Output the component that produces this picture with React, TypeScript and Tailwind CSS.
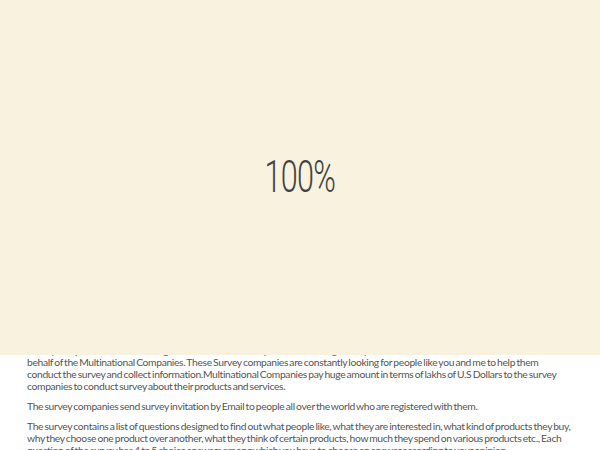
import React from 'react';

const App = () => {
  return (
    <div className="relative w-[600px] h-[450px] overflow-hidden bg-white">
      <div className="h-[344px]" />
      <div
        className="pl-[27px] pr-[25px] flex flex-col gap-2 text-[#555] text-[10.3px] leading-[12px] tracking-[-0.33px] [word-spacing:-1px]"
        style={{ fontFamily: 'Lato, "Open Sans", sans-serif' }}
      >
        <p>
          Survey companies are research organisations that collect opinions from the general public and do research on
          <br />
          behalf of the Multinational Companies. These Survey companies are constantly looking for people like you and me to help them
          <br />
          conduct the survey and collect information.Multinational Companies pay huge amount in terms of lakhs of U.S Dollars to the survey
          <br />
          companies to conduct survey about their products and services.
        </p>
        <p>
          The survey companies send survey invitation by Email to people all over the world who are registered with them.
        </p>
        <p>
          The survey contains a list of questions designed to find out what people like, what they are interested in, what kind of products they buy,
          why they choose one product over another, what they think of certain products, how much they spend on various products etc., Each
          question of the survey has 4 to 5 choice answers among which you have to choose an answer according to your opinion.
        </p>
      </div>

      {/* loader overlay */}
      <div className="absolute top-0 left-0 right-0 h-[355px] bg-[#f9f2de] flex items-center justify-center">
        <div
          className="text-[45px] font-light text-[#444] tracking-tight scale-x-[0.68] pb-[2px]"
          style={{ fontFamily: 'Roboto, sans-serif' }}
        >
          100%
        </div>
      </div>
    </div>
  );
};

export default App;
